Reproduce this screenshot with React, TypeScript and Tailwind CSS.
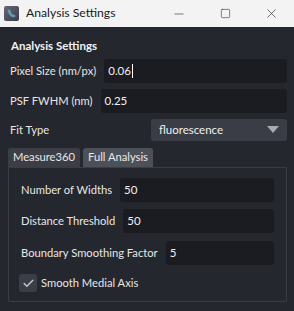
import React from 'react';
import { Minus, Square, X, Check } from 'lucide-react';

const font = { fontFamily: '"Segoe UI", Lato, "Noto Sans", sans-serif' };

const Field: React.FC<{ label: string; value: string; cursor?: boolean }> = ({ label, value, cursor }) => (
  <div className="flex items-center h-[24px]">
    <span className="text-[11.2px] text-[#e6e6e6] whitespace-nowrap pr-[8px]">{label}</span>
    <div className="flex-1 h-full bg-[#1b1c21] rounded-[3px] flex items-center px-[4px] text-[11.5px] text-[#f0f0f0]">
      {value}
      {cursor && <span className="w-px h-[14px] bg-white ml-px" />}
    </div>
  </div>
);

const App: React.FC = () => {
  return (
    <div className="w-[294px] h-[311px] bg-[#25272e] flex flex-col overflow-hidden" style={font}>
      {/* barra de título */}
      <div className="h-[27px] bg-[#f3f3f3] flex items-center shrink-0">
        <div className="ml-[4px] w-[15px] h-[15px] rounded-[2px] bg-gradient-to-br from-[#6a6878] to-[#3e3a4c] flex items-center justify-center">
          <svg width="11" height="11" viewBox="0 0 11 11">
            <path d="M2 2 C3 1 5 2 5 4 C5 6 7 6 9 7 C10 8 9 10 7 9 C5 9 4 8 3 6 C2 5 1 3 2 2 Z" fill="#5f9ea8" />
          </svg>
        </div>
        <span className="ml-[7px] text-[12.2px] text-[#1a1a1a]">Analysis Settings</span>
        <div className="ml-auto flex items-center">
          <div className="w-[46px] flex justify-center"><Minus size={14} strokeWidth={1} color="#222" /></div>
          <div className="w-[46px] flex justify-center"><Square size={11} strokeWidth={1.2} color="#222" /></div>
          <div className="w-[46px] flex justify-center"><X size={15} strokeWidth={1} color="#222" /></div>
        </div>
      </div>

      <div className="flex flex-col px-[7px]">
        <div className="pl-[4px] pt-[11px] text-[11.5px] font-bold text-[#f2f2f2] leading-[16px]">Analysis Settings</div>

        <div className="flex flex-col gap-[6px] mt-[5px]">
          <div className="pl-[3px]"><Field label="Pixel Size (nm/px)" value="0.06" cursor /></div>
          <div className="pl-[3px]"><Field label="PSF FWHM (nm)" value="0.25" /></div>
          <div className="flex items-center h-[22px] pl-[3px]">
            <span className="text-[11.2px] text-[#e6e6e6] w-[141px]">Fit Type</span>
            <div className="flex-1 h-full bg-[#3a3d45] rounded-[3px] flex items-center px-[8px] text-[11.5px] text-[#f0f0f0]">
              fluorescence
              <svg className="ml-auto" width="12" height="8" viewBox="0 0 12 8">
                <path d="M0 0 H12 L6 7 Z" fill="#a9abb0" />
              </svg>
            </div>
          </div>
        </div>

        {/* abas */}
        <div className="mt-[7px] flex items-end pl-[1px] h-[19px]">
          <div className="h-[19px] px-[5px] bg-[#3b3e46] rounded-t-[3px] text-[11.2px] text-[#e8e8e8] flex items-center">Measure360</div>
          <div className="ml-[3px] h-[19px] px-[5px] bg-[#4c5059] rounded-t-[3px] text-[11.2px] text-[#e8e8e8] flex items-center">Full Analysis</div>
        </div>
        <div className="ml-[1px] h-[135px] border border-[#3a3d45] rounded-b-[2px] px-[12px] pt-[10px] flex flex-col">
          <Field label="Number of Widths" value="50" />
          <div className="mt-[7px]"><Field label="Distance Threshold" value="50" /></div>
          <div className="mt-[8px]"><Field label="Boundary Smoothing Factor" value="5" /></div>
          <div className="flex items-center mt-[9px] -ml-[2px]">
            <div className="w-[18px] h-[18px] bg-[#3b3e46] rounded-[3px] flex items-center justify-center">
              <Check size={13} strokeWidth={2.5} color="#c8cad0" />
            </div>
            <span className="ml-[4px] text-[11.2px] text-[#e6e6e6]">Smooth Medial Axis</span>
          </div>
        </div>
      </div>
    </div>
  );
};

export default App;
